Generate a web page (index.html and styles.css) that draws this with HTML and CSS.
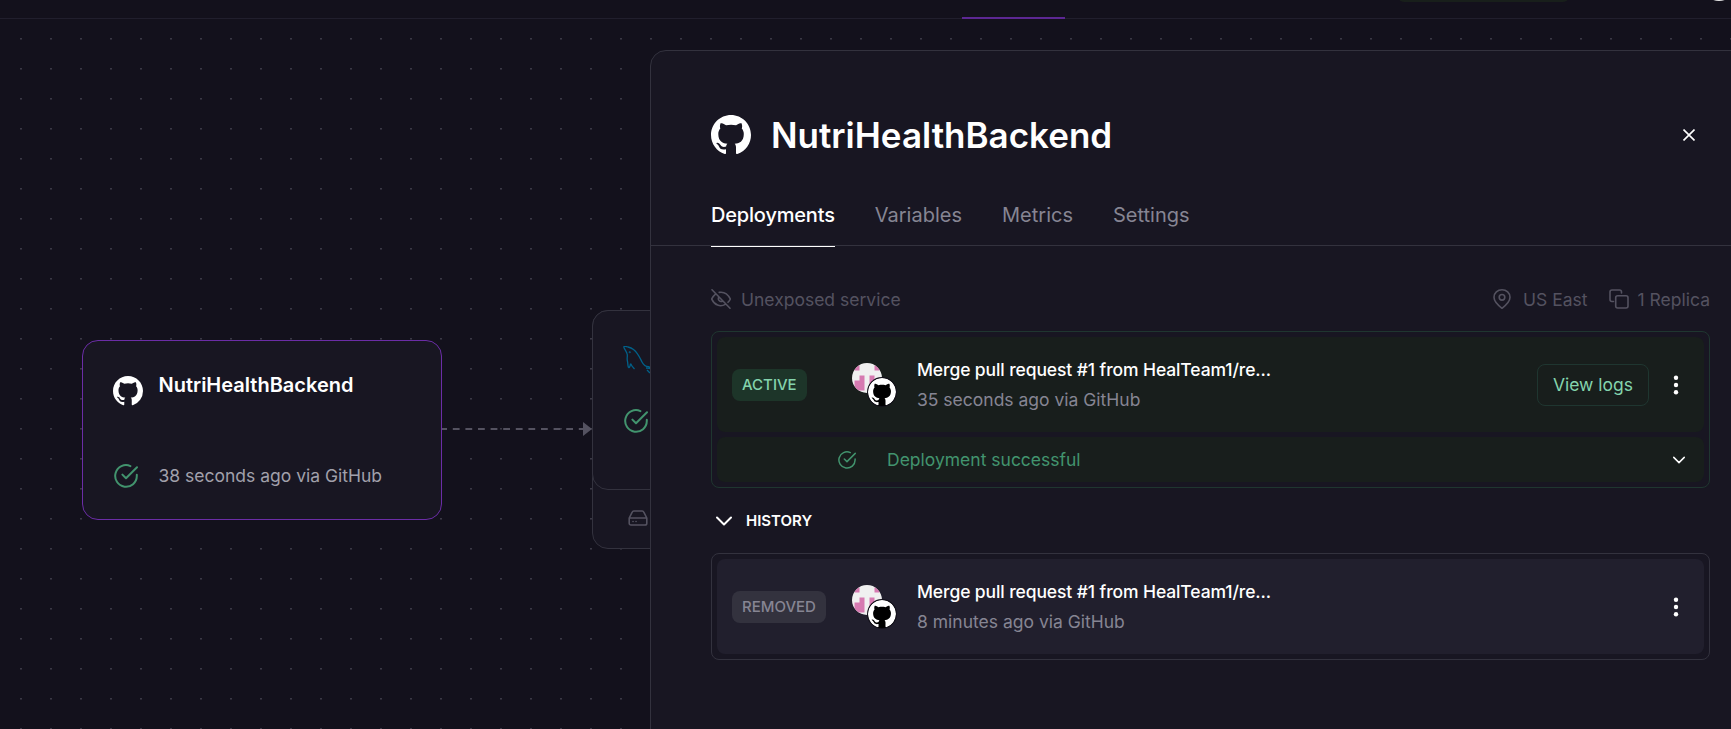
FILE: index.html
```html
<!DOCTYPE html>
<html lang="en">
<head>
<meta charset="utf-8">
<title>NutriHealthBackend</title>
<link rel="stylesheet" href="styles.css">
</head>
<body>
<svg class="defs" aria-hidden="true">
  <symbol id="github" viewBox="0 0 16 16"><path d="M8 0C3.58 0 0 3.58 0 8c0 3.54 2.29 6.53 5.47 7.59.4.07.55-.17.55-.38 0-.19-.01-.82-.01-1.49-2.01.37-2.53-.49-2.69-.94-.09-.23-.48-.94-.82-1.13-.28-.15-.68-.52-.01-.53.63-.01 1.08.58 1.23.82.72 1.21 1.87.87 2.33.66.07-.52.28-.87.51-1.07-1.78-.2-3.64-.89-3.64-3.95 0-.87.31-1.59.82-2.15-.08-.2-.36-1.02.08-2.12 0 0 .67-.21 2.2.82.64-.18 1.32-.27 2-.27s1.36.09 2 .27c1.53-1.04 2.2-.82 2.2-.82.44 1.1.16 1.92.08 2.12.51.56.82 1.27.82 2.15 0 3.07-1.87 3.75-3.65 3.95.29.25.54.73.54 1.48 0 1.07-.01 1.93-.01 2.2 0 .21.15.46.55.38A8.01 8.01 0 0 0 16 8c0-4.42-3.58-8-8-8z"/></symbol>
  <symbol id="check" viewBox="0 0 24 24"><path d="M22.8 10.8V12A10.8 10.8 0 1 1 16.4 2.1M23 3.2 12 14.2l-3.6-3.6"/></symbol>
  <symbol id="chevron" viewBox="0 0 16 10"><path d="m1 1.5 7 7 7-7"/></symbol>
  <symbol id="kebab" viewBox="0 0 6 20"><circle cx="3" cy="2.7" r="2.2"/><circle cx="3" cy="10" r="2.2"/><circle cx="3" cy="17.3" r="2.2"/></symbol>
  <symbol id="identicon" viewBox="0 0 30 30"><path fill="#f0f0f0" d="M0 0h30v30H0z"/><path fill="#d67ab1" d="M2.5 2.5h5v5h-5zM22.5 2.5h5v5h-5zM7.5 12.5h5v5h-5zM17.5 12.5h5v5h-5zM2.5 17.5h10v10h-10zM17.5 17.5h10v10h-10z"/></symbol>
</svg>

<header class="topbar">
  <span class="topbar-tab"></span>
  <span class="topbar-pill"></span>
  <span class="topbar-avatar"></span>
</header>

<main class="canvas">
  <section class="node node-backend">
    <div class="node-head">
      <svg class="node-logo"><use href="#github"/></svg>
      <h2>NutriHealthBackend</h2>
    </div>
    <div class="node-status">
      <svg class="check"><use href="#check"/></svg>
      <span>38 seconds ago via GitHub</span>
    </div>
  </section>

  <svg class="edge" viewBox="0 0 150 18">
    <path class="edge-line" d="M0 9H142"/>
    <path class="edge-head" d="M141 2v14l9-7z"/>
  </svg>

  <section class="node-group">
    <div class="node node-db">
      <svg class="dolphin" viewBox="0 0 30 30"><path d="M5.500 21.500C4.500 19 5 17.500 4.500 15.500 3.500 12 5 10 4 7.500 3 4.500 1 2.500 .8 1 .8 0 3 .3 5 1c2 .5 3.500 1 5.500 2.500C15 7 17 12 19 16c1.500 3 3.500 4.500 6.500 4.700 1 .3 3 2.300 4 3.300M5.500 21.500c1 .5 1.700-1.500 2-4M7.500 17.500c.8 2 2 3.500 4 5.500M23 22c1 0 2 .3 4 .5M24 24l3 3"/><circle cx="6.700" cy="6.200" r=".4"/></svg>
      <svg class="check"><use href="#check"/></svg>
    </div>
    <div class="volume">
      <svg class="drive" viewBox="0 0 20 16"><path d="M1.200 8 4.200 2.100C4.500 1.400 5 1 5.800 1h8.400c.8 0 1.300.4 1.600 1.100L18.800 8v5.200c0 1-.7 1.800-1.800 1.800H3c-1.100 0-1.800-.8-1.800-1.800zM1.200 8h17.600M5 11.500h.1M8 11.500h.1"/></svg>
    </div>
  </section>

  <aside class="panel">
    <div class="panel-head">
      <svg class="panel-logo"><use href="#github"/></svg>
      <h1>NutriHealthBackend</h1>
      <svg class="close" viewBox="0 0 12 12"><path d="m.5.5 11 11M11.500.5l-11 11"/></svg>
    </div>
    <nav class="tabs">
      <a class="tab tab-active">Deployments</a>
      <a class="tab">Variables</a>
      <a class="tab">Metrics</a>
      <a class="tab">Settings</a>
    </nav>

    <div class="content">
      <div class="meta">
        <svg class="icon20" viewBox="0 0 20 20"><path d="m1 .8 18 18.400M8.200 3.400C13 2.600 16.800 5 19.300 10c-.6 1.300-1.400 2.400-2.300 3.300M14.300 15.400C9 18.500 3.500 16 .7 10c1-2 2.200-3.700 3.800-4.900M7.900 8c-1.500 2.600.8 5.600 4 4"/></svg>
        <span class="exposure">Unexposed service</span>
        <svg class="icon20 pin" viewBox="0 0 20 20"><path d="M18 8.300C18 13 13 17 10 19.300 7 17 2 13 2 8.300 2 4 5.600.8 10 .8s8 3.200 8 7.500z"/><circle cx="10" cy="8.300" r="2.800"/></svg>
        <span class="region">US East</span>
        <svg class="icon20" viewBox="0 0 20 20"><rect x="6.700" y="6.700" width="12.300" height="12.300" rx="2"/><path d="M4.500 12.500H3a2 2 0 0 1-2-2V3a2 2 0 0 1 2-2h7.500a2 2 0 0 1 2 2v1"/></svg>
        <span class="replica">1 Replica</span>
      </div>

      <article class="deploy deploy-live">
        <div class="deploy-row">
          <div class="badge-cell"><span class="badge">ACTIVE</span></div>
          <div class="avatars">
            <svg class="author"><use href="#identicon"/></svg>
            <span class="source"><svg><use href="#github"/></svg></span>
          </div>
          <div class="commit"><b>Merge pull request #1 from HealTeam1/re...</b><span>35 seconds ago via GitHub</span></div>
          <button class="logs">View logs</button>
          <svg class="kebab"><use href="#kebab"/></svg>
        </div>
        <div class="deploy-result">
          <svg class="check check-small"><use href="#check"/></svg>
          <span>Deployment successful</span>
          <svg class="chevron chevron-small"><use href="#chevron"/></svg>
        </div>
      </article>

      <div class="history">
        <svg class="chevron"><use href="#chevron"/></svg>
        <span>HISTORY</span>
      </div>

      <article class="deploy">
        <div class="deploy-row">
          <div class="badge-cell"><span class="badge">REMOVED</span></div>
          <div class="avatars">
            <svg class="author"><use href="#identicon"/></svg>
            <span class="source"><svg><use href="#github"/></svg></span>
          </div>
          <div class="commit"><b>Merge pull request #1 from HealTeam1/re...</b><span>8 minutes ago via GitHub</span></div>
          <svg class="kebab"><use href="#kebab"/></svg>
        </div>
      </article>
    </div>
  </aside>
</main>
</body>
</html>
```
FILE: styles.css
```css
* { box-sizing: border-box; }
body {
  margin: 0;
  height: 729px;
  overflow: hidden;
  background: #13111c;
  color: #fff;
  font-family: Inter, "Liberation Sans", sans-serif;
  font-size: 17.5px;
}
h1, h2 { margin: 0; font-weight: 600; }
svg { display: block; flex: none; fill: none; }
.defs { position: absolute; width: 0; height: 0; }

.topbar { position: relative; height: 19px; border-bottom: 1px solid #211f2d; }
.topbar-tab { position: absolute; left: 962px; top: 17px; width: 103px; height: 2px; background: #5c2793; }
.topbar-pill { position: absolute; left: 1398px; top: -38px; width: 171px; height: 40px; border-radius: 6px; background: #181f1b; }
.topbar-avatar { position: absolute; left: 1703px; top: -31px; width: 32px; height: 32px; border-radius: 50%; background: #e8e8e8; }

.canvas {
  position: relative;
  height: 710px;
  overflow: hidden;
  background-image: url("data:image/svg+xml,%3Csvg xmlns='http://www.w3.org/2000/svg' width='30' height='30'%3E%3Cpath fill='%233a3845' d='M20 19h2v1h-2z'/%3E%3Cpath fill='%23292733' d='M20 20h2v1h-2z'/%3E%3C/svg%3E");
}

.node { width: 360px; height: 180px; border: 1px solid #33323e; border-radius: 16px; background: #181622; }
.node-backend { position: absolute; left: 82px; top: 321px; border-color: #6b2da6; padding: 30px; display: flex; flex-direction: column; justify-content: space-between; }
.node-head { display: flex; gap: 15.5px; }
.node-head h2 { font-size: 20px; line-height: 29px; }
.node-logo { width: 30px; height: 30px; margin-top: 5px; fill: #fff; }
.node-status { display: flex; align-items: center; gap: 20.5px; padding-left: 1px; color: #a1a0ab; line-height: 26px; }
.node-status span { padding-top: 1px; }
.check { width: 24px; height: 24px; stroke: #42946e; stroke-width: 2; stroke-linecap: round; stroke-linejoin: round; overflow: visible; }

.edge { position: absolute; left: 442px; top: 401px; width: 150px; height: 18px; }
.edge-line { stroke: #545260; stroke-width: 2; stroke-dasharray: 6.8 5.8; stroke-dashoffset: 1.8; }
.edge-head { fill: #545260; }

.node-group { position: absolute; left: 592px; top: 291px; width: 360px; height: 239px; border: 1px solid #33323e; border-radius: 16px; background: #181622; }
.node-db { margin: -1px; padding: 35px 31px; }
.dolphin { width: 30px; height: 30px; margin-left: -1px; stroke: #00618a; stroke-width: 1.3; }
.node-db .check { margin-top: 33px; }
.volume { padding: 21px 35px; }
.drive { width: 20px; height: 16px; stroke: #545260; stroke-width: 1.6; stroke-linecap: round; stroke-linejoin: round; }

.panel { position: absolute; left: 650px; top: 31px; width: 1100px; height: 720px; border: 1px solid #33323e; border-radius: 16px; background: #181622; }
.panel-head { display: flex; align-items: center; height: 168px; padding: 0 54px 0 60px; }
.panel-logo { width: 40px; height: 40px; fill: #fff; }
.panel-head h1 { margin-left: 20px; font-size: 35px; line-height: 44px; }
.close { width: 12px; height: 12px; margin-left: auto; stroke: #fff; stroke-width: 1.6; }
.tabs { display: flex; gap: 40px; height: 27px; padding-left: 60px; border-bottom: 1px solid #33323e; font-size: 20px; color: #868593; }
.tab { height: 44px; line-height: 24px; margin-top: -16px; }
.tab-active { color: #fff; font-weight: 500; letter-spacing: -.18px; border-bottom: 1px solid #fff; }

.content { width: 1060px; padding: 38px 1px 0 60px; }
.meta { display: flex; align-items: center; height: 30px; color: #545260; }
.icon20 { width: 20px; height: 20px; stroke: #545260; stroke-width: 1.6; stroke-linecap: round; stroke-linejoin: round; }
.exposure { margin-left: 10px; }
.pin { margin-left: auto; }
.region { margin: 0 21px 0 11px; }
.replica { margin-left: 9px; }

.deploy { width: 999px; border: 1px solid #33323e; border-radius: 8px; padding: 5px; }
.deploy-live { margin-top: 17px; height: 157px; border-color: #1f3630; }
.deploy-row { display: flex; align-items: center; height: 95px; padding: 0 25px 0 15px; border-radius: 8px; background: #211f2d; }
.deploy-live .deploy-row, .deploy-result { background: #181e1c; }
.badge-cell { width: 120px; }
.badge { display: inline-block; padding: 0 10px; border-radius: 8px; background: #33323e; color: #868593; font-size: 15px; font-weight: 500; line-height: 32px; }
.deploy-live .badge { background: #1d3529; color: #84d4ad; }
.avatars { position: relative; width: 44px; height: 44px; }
.author { width: 30px; height: 30px; border-radius: 50%; }
.source { position: absolute; left: 15px; top: 14px; width: 30px; height: 30px; padding: 1px; border-radius: 50%; background: #13111c; }
.source svg { width: 28px; height: 28px; border-radius: 50%; background: #000; fill: #fff; }
.commit { display: flex; flex-direction: column; margin: 0 auto 0 21px; line-height: 30px; }
.commit b { font-weight: 500; letter-spacing: -.1px; }
.commit span { color: #868593; }
.logs { width: 112px; height: 42px; margin-right: 24px; padding: 0; border: 1px solid #1f3630; border-radius: 8px; background: none; color: #84d4ad; font: inherit; }
.kebab { width: 6px; height: 20px; fill: #fff; }
.deploy-result { display: flex; align-items: center; height: 45px; margin-top: 5px; padding: 0 19px 0 121px; border-radius: 8px; color: #42946e; }
.check-small { width: 18px; height: 18px; margin-right: 31px; }
.chevron { width: 16px; height: 10px; stroke: #fff; stroke-width: 2; stroke-linecap: round; stroke-linejoin: round; }
.chevron-small { width: 12px; height: 8px; margin-left: auto; }
.history { display: flex; align-items: center; gap: 14.5px; height: 65px; padding-left: 4.5px; font-size: 15px; font-weight: 600; }
```
